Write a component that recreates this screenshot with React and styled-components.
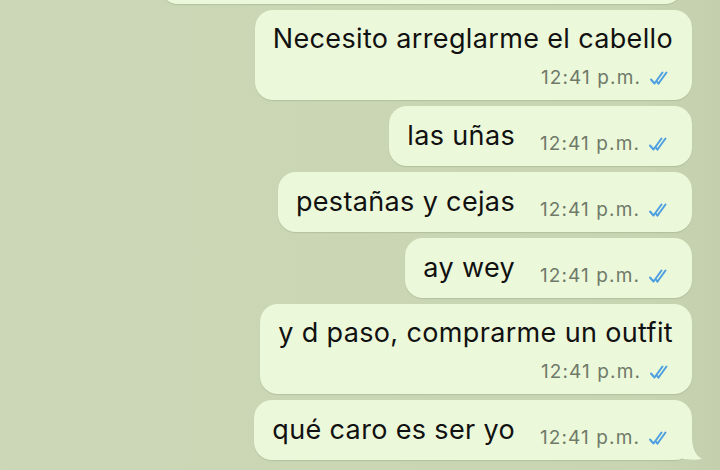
import React from 'react';
import styled, { createGlobalStyle } from 'styled-components';

const Global = createGlobalStyle`
    body {
        margin: 0;
        background: #c9d5b3;
        font-family: Inter, "Liberation Sans", sans-serif;
    }
`

const Screen = styled.div`
    width: 720px;
    height: 470px;
    box-sizing: border-box;
    overflow: hidden;
    display: flex;
    flex-direction: column;
    justify-content: flex-end;
    align-items: flex-end;
    gap: 6px;
    padding: 0 28px 10px 0;
    background: linear-gradient(90deg, #cbd7b6 0%, #c9d5b2 90%, #c4d0ad 100%);
`

const Bubble = styled.div`
    position: relative;
    flex-shrink: 0;
    box-sizing: border-box;
    display: flex;
    flex-direction: ${p => (p.$multi ? 'column' : 'row')};
    align-items: ${p => (p.$multi ? 'stretch' : 'flex-start')};
    gap: ${p => (p.$multi ? '0' : '25px')};
    padding: ${p => (p.$multi ? '12px 19px 10px 18px' : '13px 20px 0 18px')};
    height: ${p => (p.$multi ? '90px' : '60px')};
    background: #ecf8da;
    border-radius: 18px;
    box-shadow: 0 1px 1px rgba(80, 100, 60, 0.18);
`

const Tail = styled.svg`
    position: absolute;
    right: -10px;
    bottom: 0;
`

const Text = styled.span`
    font-size: 27px;
    line-height: 33px;
    letter-spacing: 0.35px;
    color: #111;
    white-space: nowrap;
`

const Meta = styled.div`
    display: flex;
    align-items: center;
    justify-content: flex-end;
    gap: 8px;
    margin-top: ${p => (p.$multi ? '12px' : '14px')};
    font-size: 19px;
    line-height: 22px;
    letter-spacing: 1.1px;
    color: #6f7a69;
    white-space: nowrap;
`

const Ticks = () => (
    <svg width="24" height="16" viewBox="0 0 24 16" fill="none" stroke="#4d9fe0" strokeWidth="2" strokeLinecap="round" strokeLinejoin="round">
        <path d="M2 9.5 L5.5 13.5 L13.5 2.5" />
        <path d="M9.5 13.5 L17.5 2.5" />
        <path d="M9.5 13.5 L8.2 12" />
    </svg>
)

const messages = [
    { text: 'Necesito arreglarme el cabello', multi: true },
    { text: 'las uñas' },
    { text: 'pestañas y cejas' },
    { text: 'ay wey' },
    { text: 'y d paso, comprarme un outfit', multi: true },
    { text: 'qué caro es ser yo', tail: true },
]

export default function App() {
    return (
        <>
            <Global />
            <Screen>
                {/* previous message, scrolled mostly out of view */}
                <Bubble $multi style={{ width: 523, marginRight: 9 }} />
                {messages.map((m, i) => (
                    <Bubble key={i} $multi={m.multi}>
                        <Text>{m.text}</Text>
                        <Meta $multi={m.multi}>
                            12:41 p.m.
                            <Ticks />
                        </Meta>
                        {m.tail && (
                            <Tail width="24" height="24" viewBox="0 0 24 24">
                                <path d="M0 0 L14 0 C14 12 17 19 24 23 C17 24.2 9 23.5 4 22.5 L0 24 Z" fill="#ecf8da" />
                            </Tail>
                        )}
                    </Bubble>
                ))}
            </Screen>
        </>
    )
}
